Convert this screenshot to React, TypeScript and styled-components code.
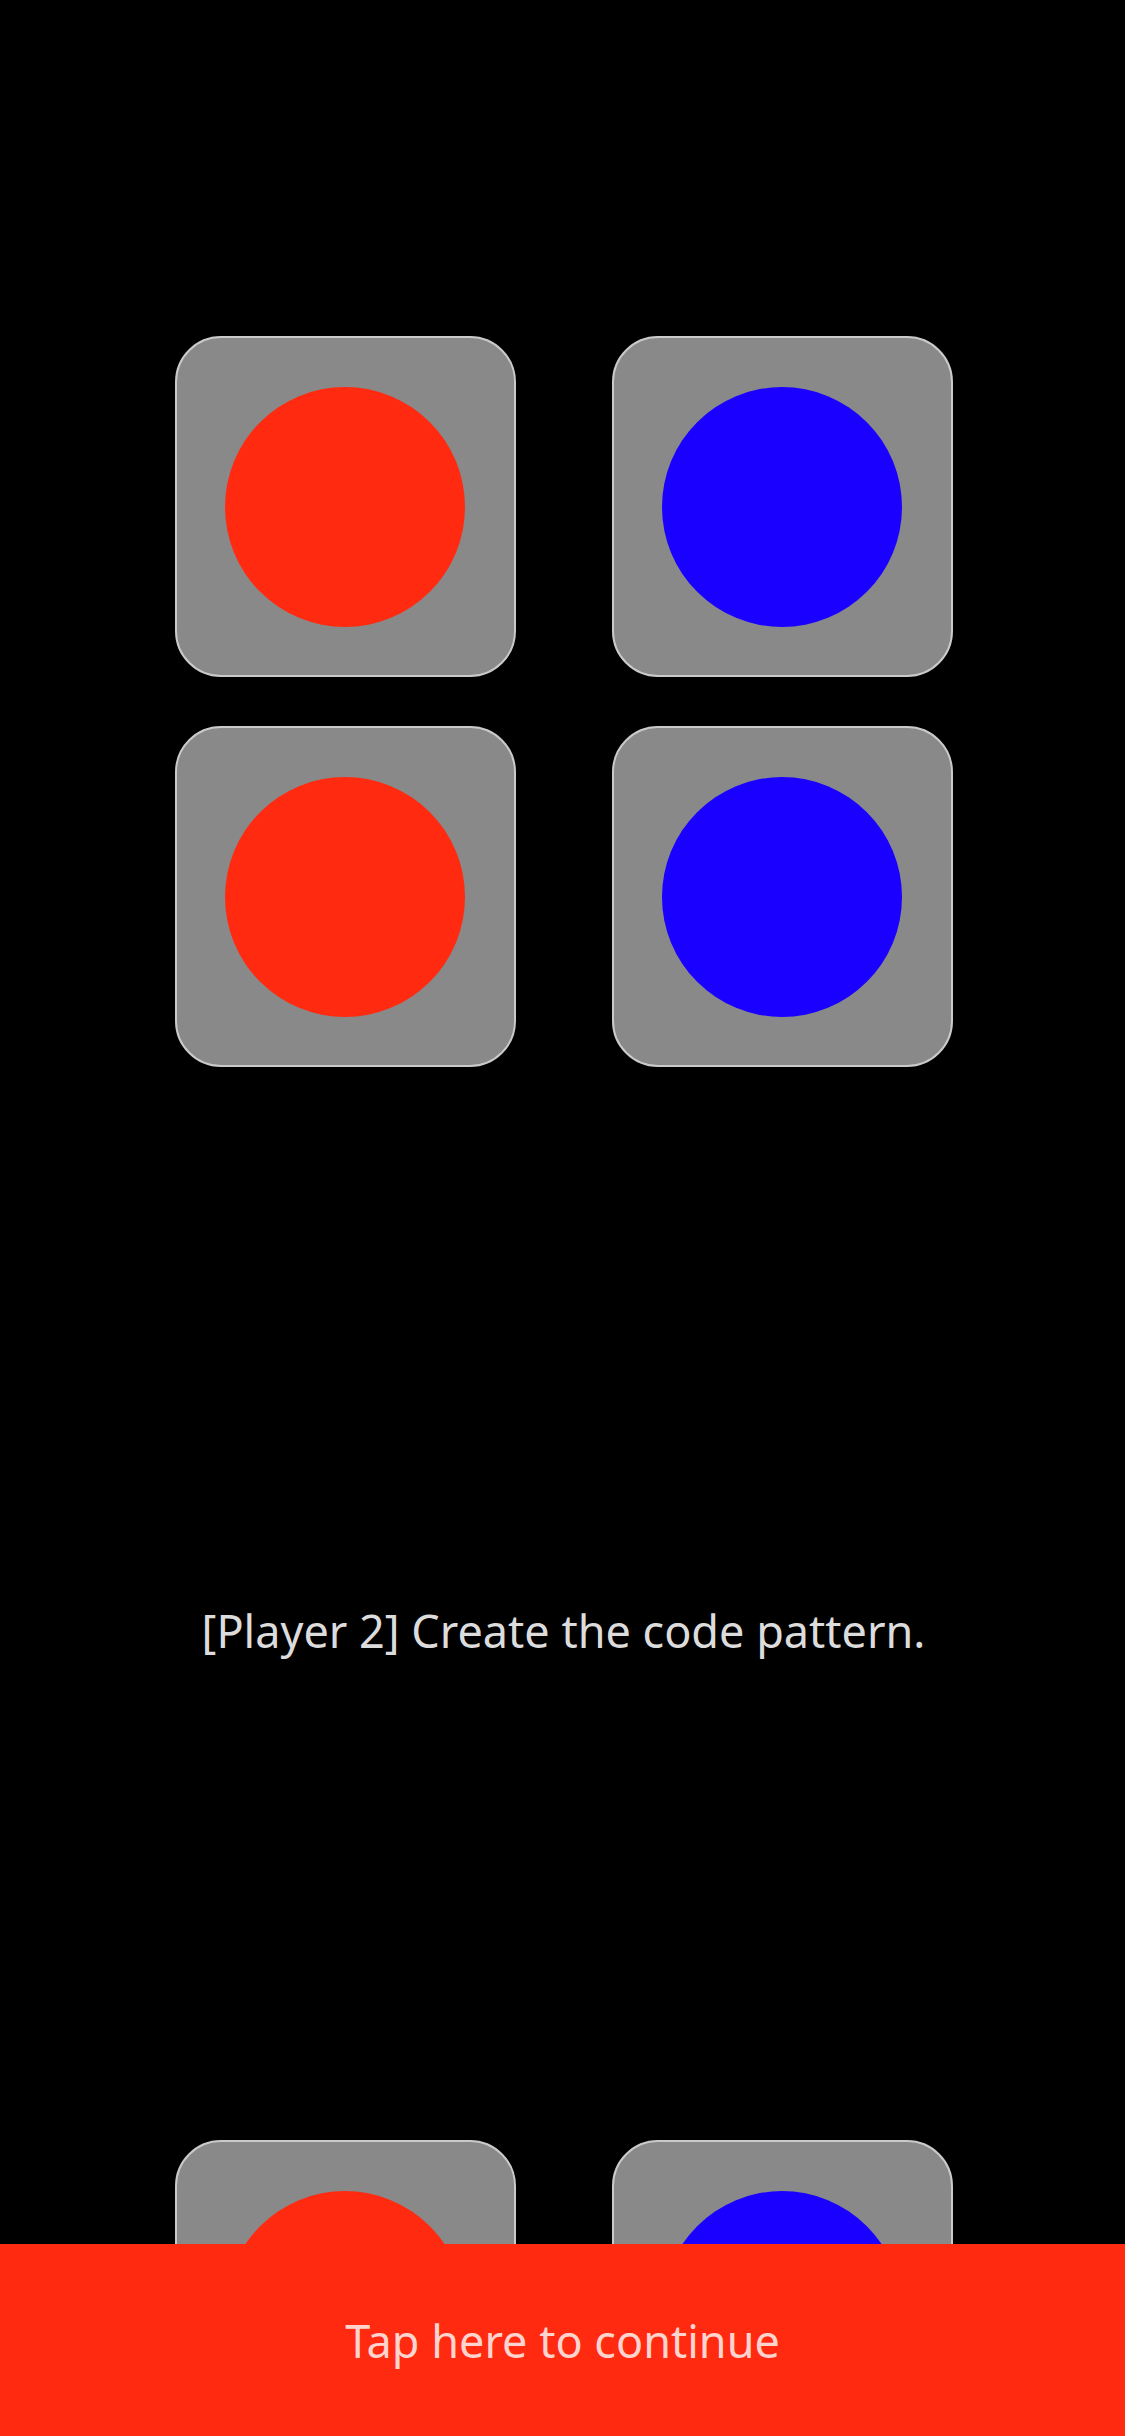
import React from "react";
import styled, { createGlobalStyle } from "styled-components";

const GlobalStyle = createGlobalStyle`
  html, body {
    margin: 0;
    padding: 0;
    background: #000000;
  }
  body {
    font-family: "Segoe UI", "Noto Sans", "Open Sans", sans-serif;
  }
`;

const Screen = styled.div`
  min-height: 100vh;
  background: #000000;
  display: flex;
  flex-direction: column;
  align-items: center;
  padding: 336px 0 0 2px;
  box-sizing: border-box;
`;

const Board = styled.div`
  display: grid;
  grid-template-columns: repeat(2, 341px);
  column-gap: 96px;
  row-gap: 49px;
`;

const Tile = styled.button`
  width: 341px;
  height: 341px;
  box-sizing: border-box;
  background: #898989;
  border: 2px solid #cacaca;
  border-radius: 46px;
  display: flex;
  align-items: center;
  justify-content: center;
  padding: 0;
  cursor: pointer;
`;

const Peg = styled.span<{ $color: string }>`
  width: 240px;
  height: 240px;
  border-radius: 50%;
  background: ${(p) => p.$color};
  display: block;
`;

const Message = styled.p`
  margin: 0;
  padding: 532px 0 477px;
  font-size: 45px;
  line-height: 64px;
  color: #dcdcdc;
  text-align: center;
`;

const ContinueBar = styled.button`
  position: fixed;
  left: 0;
  right: 0;
  bottom: 0;
  height: 192px;
  border: none;
  background: #ff2a10;
  color: #ffd4ce;
  font-family: "Segoe UI", "Noto Sans", "Open Sans", sans-serif;
  font-size: 45px;
  display: flex;
  align-items: center;
  justify-content: center;
  padding: 0;
  cursor: pointer;
`;

const RED = "#ff2a10";
const BLUE = "#1a00ff";

const pattern = [RED, BLUE, RED, BLUE];

export default function App() {
  return (
    <>
      <GlobalStyle />
      <Screen>
        <Board>
          {pattern.map((c, i) => (
            <Tile key={`a${i}`}>
              <Peg $color={c} />
            </Tile>
          ))}
        </Board>
        <Message>[Player 2] Create the code pattern.</Message>
        <Board>
          {pattern.map((c, i) => (
            <Tile key={`b${i}`}>
              <Peg $color={c} />
            </Tile>
          ))}
        </Board>
      </Screen>
      <ContinueBar>Tap here to continue</ContinueBar>
    </>
  );
}
